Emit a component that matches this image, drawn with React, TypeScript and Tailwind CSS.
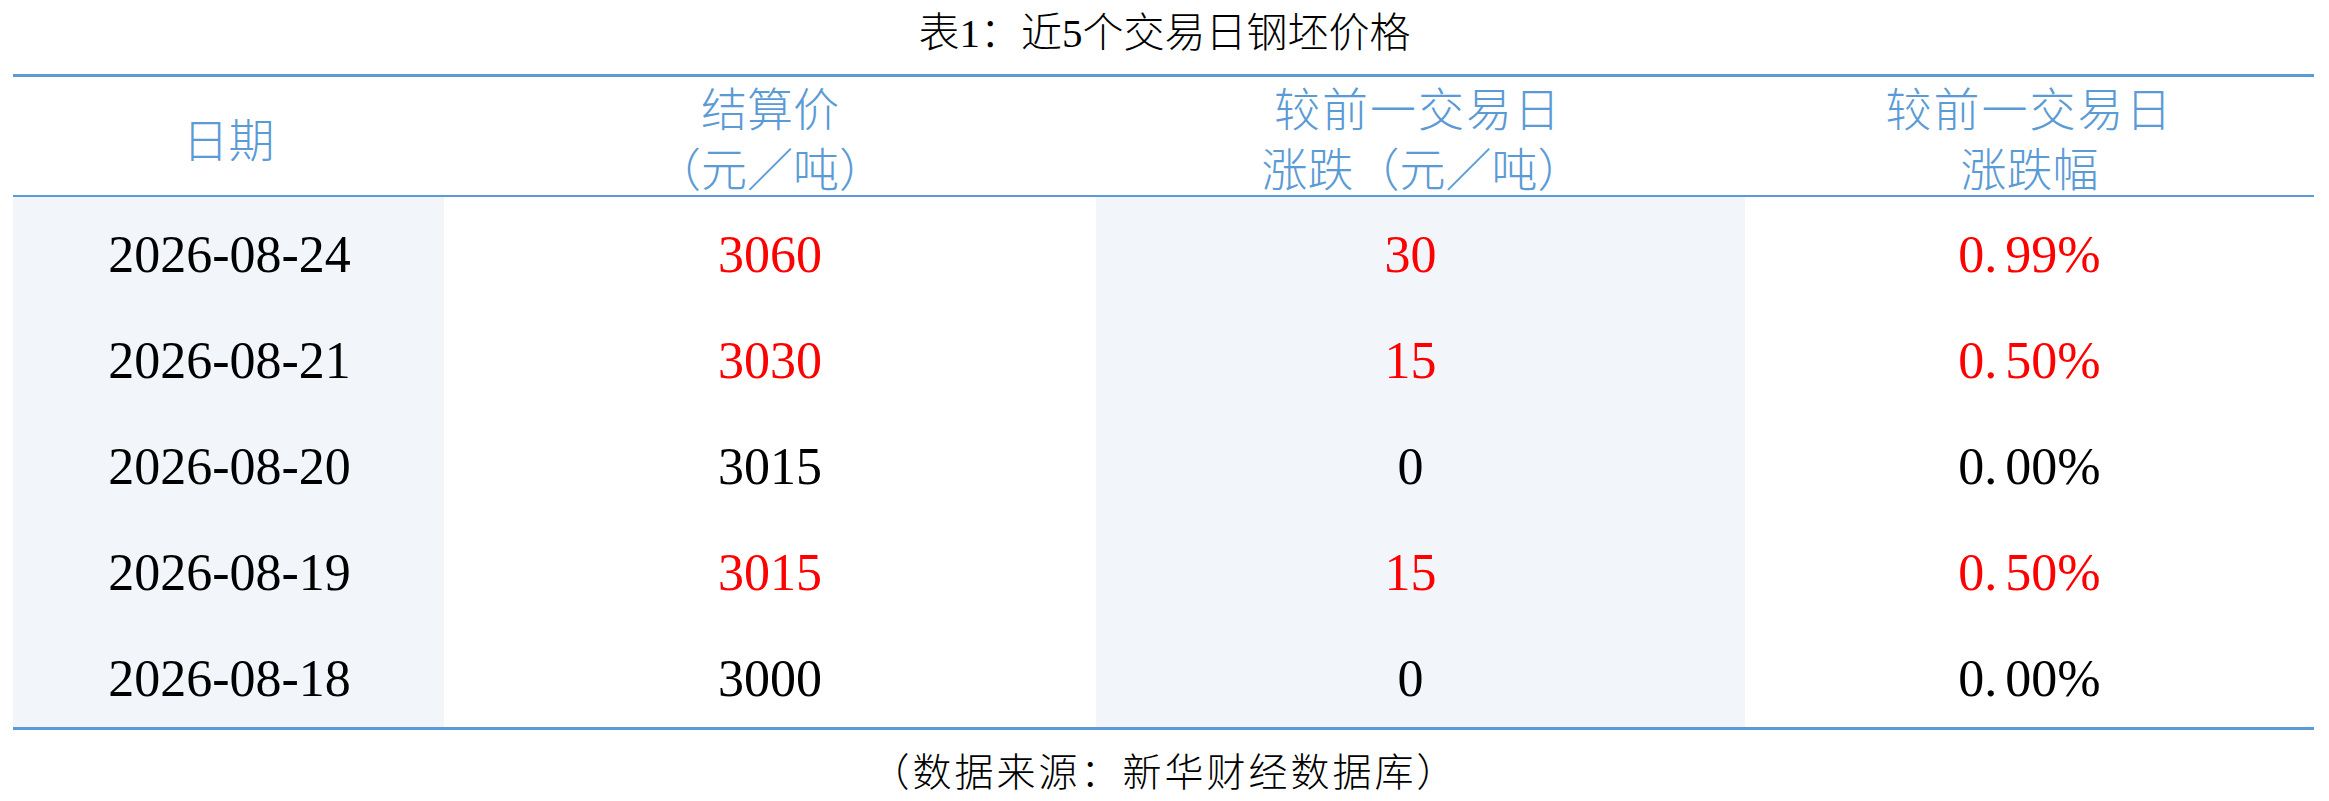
import React from "react";

type Row = { date: string; price: string; chg: string; pct: [string, string]; up: boolean };

const rows: Row[] = [
  { date: "2026-08-24", price: "3060", chg: "30", pct: ["0", "99%"], up: true },
  { date: "2026-08-21", price: "3030", chg: "15", pct: ["0", "50%"], up: true },
  { date: "2026-08-20", price: "3015", chg: "0", pct: ["0", "00%"], up: false },
  { date: "2026-08-19", price: "3015", chg: "15", pct: ["0", "50%"], up: true },
  { date: "2026-08-18", price: "3000", chg: "0", pct: ["0", "00%"], up: false },
];

const FONT = "font-['Liberation_Serif','Noto_Sans_CJK_SC',serif]";

export default function App() {
  return (
    <div className={`w-[2329px] h-[801px] bg-white text-black font-light ${FONT}`}>
      <div className="h-[74px] flex items-center justify-center pb-[8px] text-[41px] leading-[50px]">
        表1：近5个交易日钢坯价格
      </div>
      <div className="ml-[13px] w-[2301px] border-t-[3px] border-b-[3px] border-[#5b9bd5]">
        <div className="grid grid-cols-[431px_652px_649px_569px] h-[120px] border-b-[2px] border-[#5b9bd5] text-[#5b9bd5] text-[46px] leading-[60px]">
          <div className="flex flex-col items-center justify-center pt-[6px]">日期</div>
          <div className="flex flex-col items-center justify-center pt-[4px]">
            <span>结算价</span>
            <span>（元／吨）</span>
          </div>
          <div className="flex flex-col items-center justify-center pt-[4px]">
            <span className="pr-[5px] tracking-[2px]">较前一交易日</span>
            <span className="pl-[4px]">涨跌（元／吨）</span>
          </div>
          <div className="flex flex-col items-center justify-center pt-[4px]">
            <span className="tracking-[2px]">较前一交易日</span>
            <span>涨跌幅</span>
          </div>
        </div>
        {rows.map((r) => {
          const c = r.up ? "text-[#ff0000]" : "text-black";
          return (
            <div
              key={r.date}
              className="grid grid-cols-[431px_652px_649px_569px] h-[106px] text-[52px] leading-[60px]"
            >
              <div className="bg-[#f2f6fb] flex items-center justify-center pt-[10px] pl-[2px]">{r.date}</div>
              <div className={`flex items-center justify-center pt-[10px] ${c}`}>{r.price}</div>
              <div className={`bg-[#f2f6fb] flex items-center justify-center pt-[10px] pr-[20px] ${c}`}>{r.chg}</div>
              <div className={`flex items-center justify-center pt-[10px] ${c}`}>
                <span>
                  {r.pct[0]}
                  <span className="mr-[8px]">.</span>
                  {r.pct[1]}
                </span>
              </div>
            </div>
          );
        })}
      </div>
      <div className="h-[71px] flex items-center justify-center pt-[14px] text-[39px] leading-[50px] tracking-[3px]">
        （数据来源：新华财经数据库）
      </div>
    </div>
  );
}
